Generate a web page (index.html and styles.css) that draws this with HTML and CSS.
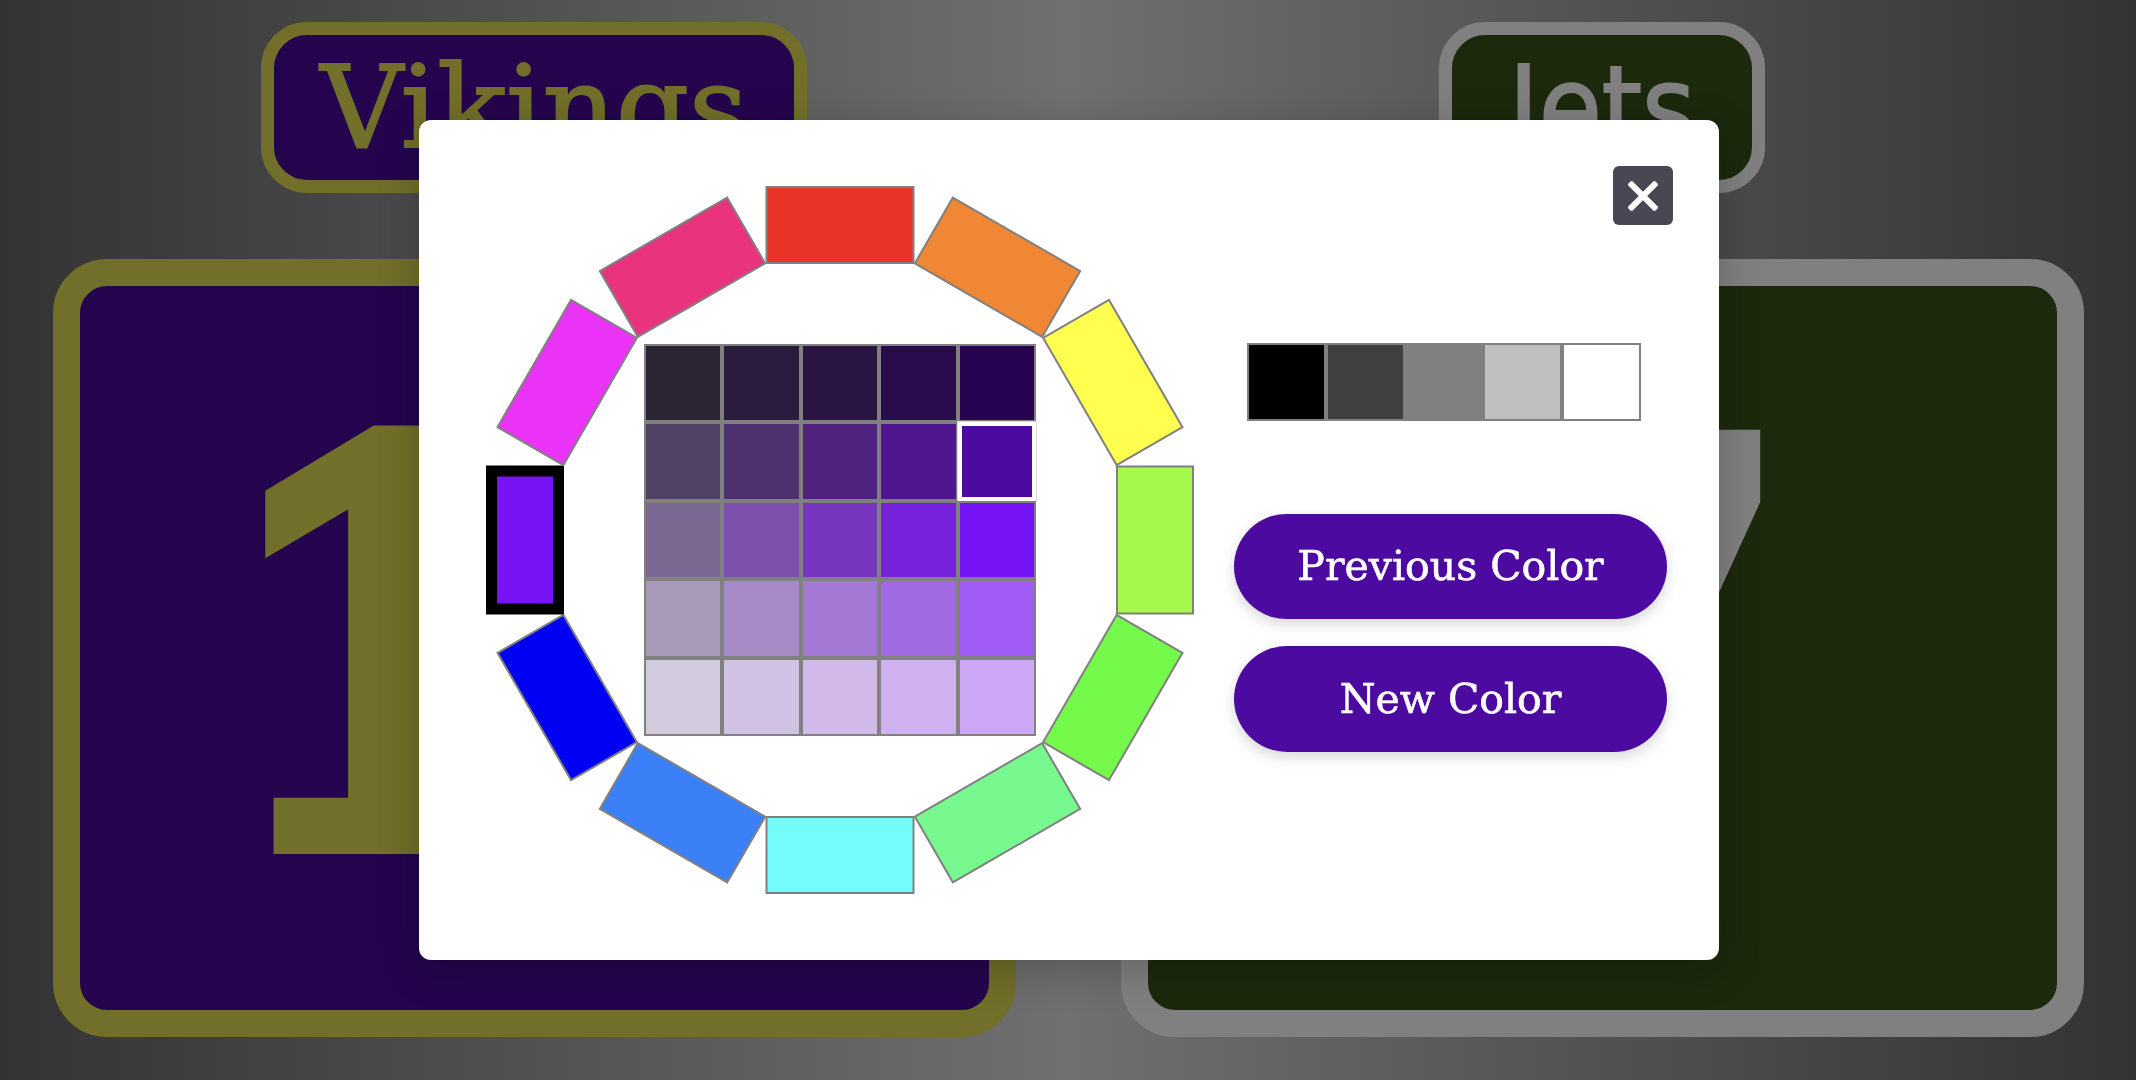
FILE: index.html
```html
<!DOCTYPE html>
<html lang="en">
<head>
<meta charset="utf-8">
<title>Scoreboard – Color Picker</title>
<link rel="stylesheet" href="styles.css">
</head>
<body>
<main class="board">
  <section class="team team--vikings">
    <div class="team__name">Vikings</div>
    <div class="team__score">10</div>
  </section>
  <section class="team team--jets">
    <div class="team__name">Jets</div>
    <div class="team__score">7</div>
  </section>
</main>

<div class="overlay">
  <div class="modal">
    <button class="modal__close" aria-label="Close">
      <svg viewBox="0 0 30 30" width="30" height="30"><path d="M1.5 1.5 L28.5 28.5 M28.5 1.5 L1.5 28.5" stroke="#fff" stroke-width="6" fill="none"/></svg>
    </button>

    <div class="wheel">
      <svg class="wheel__ring" viewBox="0 0 740 740" width="740" height="740">
        <g transform="translate(370 370)">
          <rect class="seg" x="-73.5" y="-353" width="147" height="76" fill="#e83326" transform="rotate(0)"/>
          <rect class="seg" x="-73.5" y="-353" width="147" height="76" fill="#ef8734" transform="rotate(30)"/>
          <rect class="seg" x="-73.5" y="-353" width="147" height="76" fill="#ffff50" transform="rotate(60)"/>
          <rect class="seg" x="-73.5" y="-353" width="147" height="76" fill="#a5f94b" transform="rotate(90)"/>
          <rect class="seg" x="-73.5" y="-353" width="147" height="76" fill="#75f94a" transform="rotate(120)"/>
          <rect class="seg" x="-73.5" y="-353" width="147" height="76" fill="#77f98f" transform="rotate(150)"/>
          <rect class="seg" x="-73.5" y="-353" width="147" height="76" fill="#74fbfc" transform="rotate(180)"/>
          <rect class="seg" x="-73.5" y="-353" width="147" height="76" fill="#3b80f6" transform="rotate(210)"/>
          <rect class="seg" x="-73.5" y="-353" width="147" height="76" fill="#0000f5" transform="rotate(240)"/>
          <rect class="seg seg--selected" x="-69" y="-348.5" width="138" height="67" fill="#7614f5" transform="rotate(270)"/>
          <rect class="seg" x="-73.5" y="-353" width="147" height="76" fill="#eb33f7" transform="rotate(300)"/>
          <rect class="seg" x="-73.5" y="-353" width="147" height="76" fill="#e9337f" transform="rotate(330)"/>
        </g>
      </svg>

      <div class="shades">
        <div class="shade" style="--c:#2a2433"></div>
        <div class="shade" style="--c:#2a1c3d"></div>
        <div class="shade" style="--c:#291442"></div>
        <div class="shade" style="--c:#280c4b"></div>
        <div class="shade" style="--c:#270452"></div>

        <div class="shade" style="--c:#514263"></div>
        <div class="shade" style="--c:#4d326f"></div>
        <div class="shade" style="--c:#4f227d"></div>
        <div class="shade" style="--c:#50168f"></div>
        <div class="shade shade--selected" style="--c:#4c0aa0"></div>

        <div class="shade" style="--c:#7b6893"></div>
        <div class="shade" style="--c:#7d50ad"></div>
        <div class="shade" style="--c:#7636c0"></div>
        <div class="shade" style="--c:#7622dc"></div>
        <div class="shade" style="--c:#7613f5"></div>

        <div class="shade" style="--c:#a899b9"></div>
        <div class="shade" style="--c:#a68ac6"></div>
        <div class="shade" style="--c:#a479d6"></div>
        <div class="shade" style="--c:#a16ae2"></div>
        <div class="shade" style="--c:#a25bf4"></div>

        <div class="shade" style="--c:#d1cbdd"></div>
        <div class="shade" style="--c:#d1c2e4"></div>
        <div class="shade" style="--c:#d1bae9"></div>
        <div class="shade" style="--c:#cfb1f0"></div>
        <div class="shade" style="--c:#cca8f7"></div>
      </div>
    </div>

    <div class="side">
      <div class="grays">
        <div class="gray" style="--c:#000000"></div>
        <div class="gray" style="--c:#404040"></div>
        <div class="gray" style="--c:#808080"></div>
        <div class="gray" style="--c:#bfbfbf"></div>
        <div class="gray" style="--c:#ffffff"></div>
      </div>
      <button class="pill">Previous Color</button>
      <button class="pill pill--second">New Color</button>
    </div>
  </div>
</div>
</body>
</html>
```

FILE: styles.css
```css
* { box-sizing: border-box; }

html, body {
  margin: 0;
  height: 100%;
}

body {
  background: linear-gradient(to right, #333333 0%, #707070 50%, #333333 100%);
  font-family: "DejaVu Serif", serif;
  overflow: hidden;
}

.board {
  display: grid;
  grid-template-columns: 1fr 1fr;
  height: 100%;
}

.team {
  display: flex;
  flex-direction: column;
  align-items: center;
  padding-top: 22px;
  gap: 66px;
}

.team__name {
  height: 171px;
  border: 13px solid;
  border-radius: 46px;
  display: flex;
  align-items: center;
  justify-content: center;
  font-size: 114px;
  line-height: 1;
  -webkit-text-stroke: 2px currentColor;
}

.team__score {
  width: 963px;
  height: 778px;
  border: 27px solid;
  border-radius: 54px;
  display: flex;
  align-items: center;
  justify-content: center;
  font-size: 545px;
  font-weight: 700;
  line-height: 1;
  padding-top: 4px;
  -webkit-text-stroke: 24px currentColor;
}

.team--vikings .team__name,
.team--vikings .team__score {
  background: #24054d;
  border-color: #716f29;
  color: #716f29;
}

.team--vikings .team__name {
  width: 546px;
  font-family: "DejaVu Serif", serif;
}

.team--vikings .team__score {
  font-family: "DejaVu Serif", serif;
  letter-spacing: -56px;
}

.team--jets .team__name,
.team--jets .team__score {
  background: #1c290d;
  border-color: #808080;
  color: #808080;
}

.team--jets .team__name {
  width: 326px;
  font-family: "DejaVu Sans", sans-serif;
  font-stretch: condensed;
}

.team--jets .team__score {
  font-family: "DejaVu Sans", sans-serif;
}

/* Modal */
.overlay {
  position: fixed;
  inset: 0;
  display: flex;
  align-items: center;
  justify-content: center;
}

.modal {
  position: relative;
  width: 1300px;
  height: 840px;
  margin-left: 2px;
  padding: 50px 50px 50px 51px;
  background: #ffffff;
  border-radius: 12px;
  display: flex;
  box-shadow: 0 10px 40px rgba(0, 0, 0, 0.22);
}

.modal__close {
  position: absolute;
  top: 46px;
  right: 46px;
  width: 60px;
  height: 59px;
  border: 0;
  padding: 0;
  border-radius: 6px;
  background: #4a4653;
  display: flex;
  align-items: center;
  justify-content: center;
}

.modal__close svg { display: block; }

.wheel {
  display: grid;
  width: 740px;
  height: 740px;
  flex: none;
}

.wheel > * { grid-area: 1 / 1; }

.wheel__ring { display: block; }

.seg {
  stroke: #808080;
  stroke-width: 2;
}

.seg--selected {
  stroke: #000000;
  stroke-width: 11;
}

.shades {
  place-self: center;
  width: 393px;
  height: 393px;
  display: grid;
  grid-template-columns: repeat(5, 1fr);
  grid-template-rows: repeat(5, 1fr);
}

.shade {
  background: var(--c);
  border: 2px solid #808080;
}

.shade--selected {
  border: 4px solid #ffffff;
  box-shadow: 0 0 0 1px #d8d8d8;
}

.side {
  display: flex;
  flex-direction: column;
  align-items: flex-start;
  margin-left: 24px;
  padding-top: 173px;
}

.grays {
  display: grid;
  grid-template-columns: repeat(5, 1fr);
  width: 394px;
  height: 78px;
  margin-left: 13px;
}

.gray {
  background: var(--c);
  border: 2px solid #808080;
}

.pill {
  width: 433px;
  height: 105px;
  margin-top: 93px;
  border: 0;
  border-radius: 53px;
  background: #4c0aa0;
  color: #ffffff;
  font-family: "DejaVu Serif", serif;
  font-size: 41px;
  line-height: 1;
  -webkit-text-stroke: 0.6px #ffffff;
  box-shadow: 0 5px 14px rgba(0, 0, 0, 0.16);
  padding: 0;
}

.pill--second {
  margin-top: 27px;
  height: 106px;
}
```
